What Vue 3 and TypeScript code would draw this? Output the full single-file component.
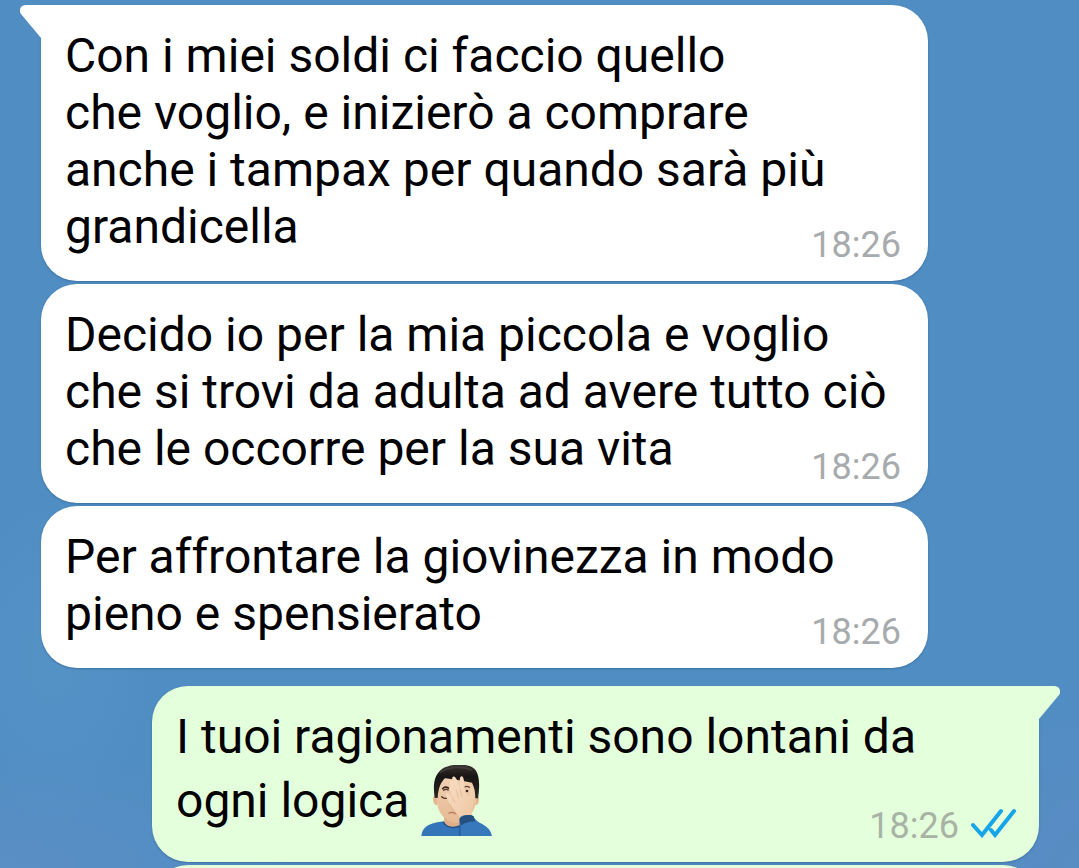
<script setup lang="ts">
interface Message {
  id: number
  outgoing: boolean
  tail: boolean
  facepalm: boolean
  lines: string[]
  time: string
}

const messages: Message[] = [
  {
    id: 1,
    outgoing: false,
    tail: true,
    facepalm: false,
    lines: [
      'Con i miei soldi ci faccio quello',
      'che voglio, e inizierò a comprare',
      'anche i tampax per quando sarà più',
      'grandicella',
    ],
    time: '18:26',
  },
  {
    id: 2,
    outgoing: false,
    tail: false,
    facepalm: false,
    lines: [
      'Decido io per la mia piccola e voglio',
      'che si trovi da adulta ad avere tutto ciò',
      'che le occorre per la sua vita',
    ],
    time: '18:26',
  },
  {
    id: 3,
    outgoing: false,
    tail: false,
    facepalm: false,
    lines: ['Per affrontare la giovinezza in modo', 'pieno e spensierato'],
    time: '18:26',
  },
  {
    id: 4,
    outgoing: true,
    tail: true,
    facepalm: true,
    lines: ['I tuoi ragionamenti sono lontani da', 'ogni logica '],
    time: '18:26',
  },
  { id: 5, outgoing: true, tail: false, facepalm: false, lines: [], time: '' },
]
</script>

<template>
  <main class="chat">
    <article
      v-for="m in messages"
      :key="m.id"
      class="bubble"
      :class="{ outgoing: m.outgoing, tailed: m.tail }"
    >
      <svg v-if="m.tail" class="tail" viewBox="0 0 22 34" aria-hidden="true">
        <path d="M22 0H6C1 0-2 5 1 9L21 33L22 34Z" />
      </svg>
      <p class="text"><span
          v-for="(line, i) in m.lines"
          :key="i"
          :class="{ line: i < m.lines.length - 1 }"
        >{{ line }}</span><svg
          v-if="m.facepalm"
          class="emoji"
          viewBox="36 30 213 213"
          role="img"
          aria-label="Uomo che si copre il volto"
        >
          <defs>
            <linearGradient id="skin" x1="0" y1="0" x2="0" y2="1">
              <stop offset="0" stop-color="#f0d0b0" />
              <stop offset="1" stop-color="#e6b993" />
            </linearGradient>
            <linearGradient id="hair" x1="0" y1="0" x2="0" y2="1">
              <stop offset="0" stop-color="#3b3533" />
              <stop offset="0.35" stop-color="#181514" />
              <stop offset="1" stop-color="#2b2422" />
            </linearGradient>
            <linearGradient id="hand" x1="0" y1="0" x2="1" y2="1">
              <stop offset="0" stop-color="#f8dfc6" />
              <stop offset="1" stop-color="#efc6a2" />
            </linearGradient>
          </defs>
          <path d="M37 243C40 216 59 204 105 199H163C210 199 243 213 248 243Z" fill="#3474b8" />
          <path d="M105 180V202C112 224 146 224 160 204V178Z" fill="#dfae88" />
          <path d="M103 201C112 219 137 222 157 211" fill="none" stroke="#245287" stroke-width="5" />
          <path d="M77 122C69 122 71 149 83 151L88 143L86 122ZM205 122C213 122 212 149 200 151L194 142L198 121Z" fill="#e5b48e" />
          <path d="M83 96C80 136 84 164 101 183C116 199 132 205 145 204C168 202 198 174 201 139L202 94C180 54 104 55 83 96Z" fill="url(#skin)" />
          <path d="M77 128C72 93 74 65 93 47C110 28 169 22 192 38C213 51 213 94 207 130H199C199 111 196 96 189 83C158 77 132 73 108 70C96 81 88 98 86 129Z" fill="url(#hair)" />
          <path d="M94 52C119 35 163 32 188 45" fill="none" stroke="#514947" stroke-width="5" stroke-linecap="round" opacity=".55" />
          <path d="M101 101C106 95 112 95 118 99" fill="none" stroke="#33241c" stroke-width="5" stroke-linecap="round" />
          <path d="M104 106C109 102 114 103 118 105M98 125C103 130 109 131 116 130" fill="none" stroke="#513526" stroke-width="4" stroke-linecap="round" />
          <path d="M167 96C172 93 177 94 181 97" fill="none" stroke="#5b4030" stroke-width="4" stroke-linecap="round" />
          <path d="M120 174C127 171 134 172 139 176" fill="none" stroke="#b6755c" stroke-width="4" stroke-linecap="round" />
          <path d="M151 190C145 175 131 163 122 147C116 135 106 118 113 115C119 112 126 123 130 128C125 112 118 83 124 77C131 72 136 94 142 106C137 87 124 70 132 65C141 61 148 84 154 104C152 84 150 67 157 64C167 63 165 88 168 109L177 126C181 114 185 96 192 99C199 102 195 131 191 155C189 168 188 177 188 187Z" fill="url(#hand)" />
          <path d="M130 128L138 142M142 106L148 126M154 104L158 124M151 190C145 175 131 163 122 147" fill="none" stroke="#deb08b" stroke-width="2" stroke-linecap="round" />
          <circle cx="174" cy="108" r="4" fill="#33241c" />
          <path d="M153 243C151 219 150 202 153 187C163 179 184 178 193 184C201 202 222 206 235 218C244 226 247 235 248 243Z" fill="#3778bc" />
          <path d="M152 190C161 180 184 177 194 184L198 200C185 198 170 202 157 211C152 204 151 197 152 190Z" fill="#254f7e" />
          <path d="M154 212C151 222 152 233 153 243" fill="none" stroke="#245a97" stroke-width="4" />
        </svg><span v-if="m.time" class="meta">
          <time>{{ m.time }}</time>
          <svg v-if="m.outgoing" class="ticks" viewBox="0 0 46 30" role="img" aria-label="Letto">
            <path d="M3 17L12 27L31 3M21 22L25 27L44 3" />
          </svg>
        </span></p>
    </article>
  </main>
</template>

<style>
body {
  margin: 0;
}
</style>

<style scoped>
.chat {
  box-sizing: border-box;
  display: flex;
  flex-direction: column;
  gap: 3px;
  height: 100vh;
  overflow: hidden;
  padding: 5px 40px 0 41px;
  background:
    radial-gradient(ellipse 300px 120px at 0 100%, #5a8fc5 0, #5a8fc500 100%),
    radial-gradient(ellipse 160px 200px at 100% 100%, #588cc3 0, #588cc300 100%),
    radial-gradient(ellipse 100px 160px at 5% 76%, #5592c6 0, #5592c600 100%),
    #508dc2;
  font-family: Roboto, "Liberation Sans", sans-serif;
}

.bubble {
  position: relative;
  flex-shrink: 0;
  box-sizing: border-box;
  width: calc(100% - 111px);
  min-height: 80px;
  padding: 22px 27px 26px 24px;
  border-radius: 36px;
  background: #ffffff;
  box-shadow: 0 1px 2px #2d5f8c99;
}

.bubble.tailed {
  border-top-left-radius: 0;
}

.bubble.outgoing {
  align-self: flex-end;
  background: #e4ffdb;
}

.bubble.outgoing.tailed {
  margin-top: 15px;
  border-top-left-radius: 36px;
  border-top-right-radius: 0;
}

.tail {
  position: absolute;
  top: 0;
  left: -21px;
  width: 22px;
  height: 34px;
  fill: #ffffff;
}

.outgoing .tail {
  left: auto;
  right: -21px;
  fill: #e4ffdb;
  transform: scaleX(-1);
}

.text {
  margin: 0;
  color: #000000;
  font-size: 48px;
  line-height: 57px;
  white-space: pre-wrap;
}

.line {
  display: block;
}

.emoji {
  width: 71px;
  height: 71px;
  vertical-align: -19px;
}

.meta {
  float: right;
  display: flex;
  align-items: center;
  gap: 11px;
  height: 24px;
  margin-top: 35px;
  margin-bottom: -2px;
  color: #a8abad;
  font-size: 36px;
  line-height: 24px;
  white-space: normal;
}

.outgoing .meta {
  margin-top: 49px;
  margin-right: -4px;
  color: #a8b3a6;
}

.ticks {
  width: 46px;
  height: 30px;
  margin-top: -7px;
  fill: none;
  stroke: #16a5e8;
  stroke-width: 4;
  stroke-linecap: round;
  stroke-linejoin: miter;
}
</style>
